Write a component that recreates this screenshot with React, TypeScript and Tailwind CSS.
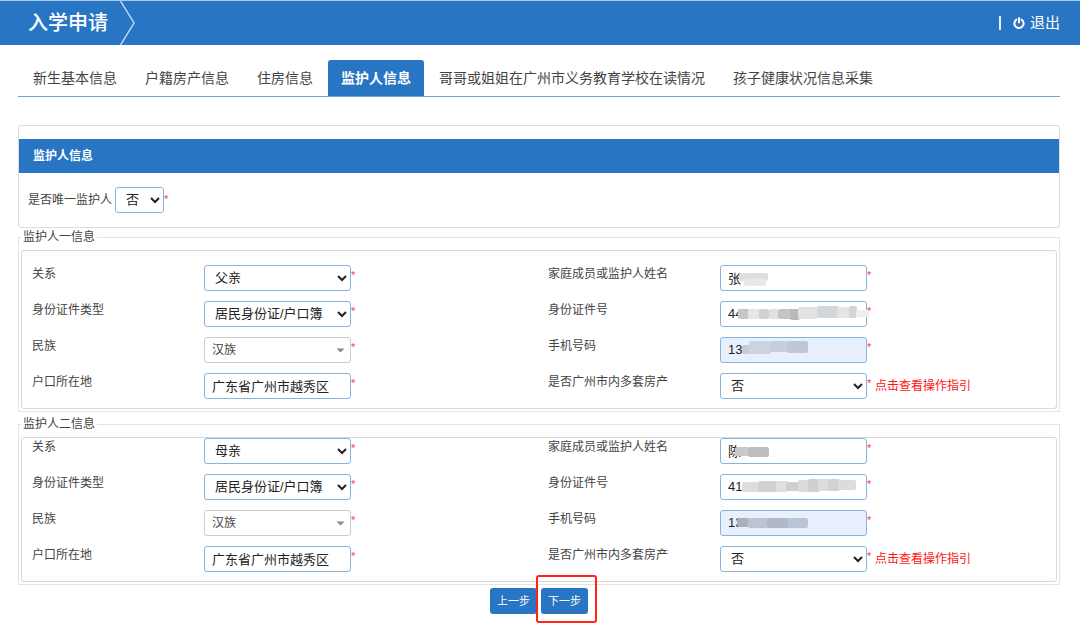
import { useState } from "react";
import { twMerge } from "tailwind-merge";

const tabs = [
  "新生基本信息",
  "户籍房产信息",
  "住房信息",
  "监护人信息",
  "哥哥或姐姐在广州市义务教育学校在读情况",
  "孩子健康状况信息采集",
];

// one painted strip of a mask: x, y, width, height, colour
type Strip = [number, number, number, number, string];

interface Guardian {
  id: string;
  legend: string;
  relation: string;
  name: string;
  idNumber: string;
  phone: string;
  nameMask: Strip[];
  idMask: Strip[];
  phoneMask: Strip[];
}

const guardians: Guardian[] = [
  {
    id: "g1",
    legend: "监护人一信息",
    relation: "父亲",
    name: "张",
    idNumber: "44",
    phone: "138",
    nameMask: [
      [19, 8, 29, 8, "#dedede"],
      [24, 14, 22, 7, "#e8e8e8"],
    ],
    idMask: [
      [18, 8, 12, 10, "#c9c5c5"],
      [28, 8, 12, 10, "#e6e6e6"],
      [39, 8, 10, 10, "#cfd0d3"],
      [49, 8, 10, 10, "#e0e0e0"],
      [58, 8, 14, 10, "#c6c4c6"],
      [70, 8, 10, 11, "#b8bab8"],
      [78, 6, 20, 12, "#e0e2e4"],
      [97, 5, 22, 12, "#d3d7da"],
      [117, 6, 14, 11, "#e3e5e7"],
      [129, 5, 8, 12, "#d2d5d8"],
      [136, 9, 13, 7, "#eeeeee"],
    ],
    phoneMask: [
      [22, 8, 14, 9, "#c5cddb"],
      [29, 4, 22, 13, "#ccd4e2"],
      [50, 4, 18, 11, "#c6cede"],
      [67, 4, 21, 12, "#bfc8d7"],
    ],
  },
  {
    id: "g2",
    legend: "监护人二信息",
    relation: "母亲",
    name: "陈",
    idNumber: "41",
    phone: "13",
    nameMask: [
      [15, 9, 14, 9, "#c9c9c9"],
      [28, 9, 21, 10, "#bdbdbd"],
    ],
    idMask: [
      [22, 8, 18, 10, "#dddddb"],
      [38, 7, 20, 11, "#d2d2d4"],
      [56, 7, 12, 11, "#dfdfdf"],
      [66, 8, 14, 9, "#d0cfcf"],
      [78, 6, 12, 12, "#dadcdb"],
      [88, 5, 12, 13, "#cfcfd1"],
      [98, 5, 12, 12, "#dbdddd"],
      [108, 5, 12, 12, "#cfd3d3"],
      [118, 6, 18, 10, "#dbdcdc"],
    ],
    phoneMask: [
      [17, 8, 12, 9, "#a9b1bf"],
      [28, 8, 20, 10, "#bcc4d3"],
      [47, 8, 22, 10, "#b1b9c9"],
      [68, 8, 20, 10, "#bac4d8"],
    ],
  },
];

const controlClass =
  "block h-[26px] w-[147px] rounded-[3px] border border-[#85b4e3] bg-white pb-[2px] text-[13px] leading-5 text-[#222]";

const Star = () => (
  <span className="block w-[6px] pt-[2px] text-[11px] leading-4 text-[#ff3b3b]">*</span>
);

const PowerIcon = () => (
  <svg width="12" height="12" viewBox="0 0 12 12" fill="none" aria-hidden="true">
    <path
      d="M3.4 2.6a4.6 4.6 0 1 0 5.2 0M6 1v4.6"
      stroke="currentColor"
      strokeWidth="2"
      strokeLinecap="round"
    />
  </svg>
);

interface MaskProps {
  strips: Strip[];
}
const Mask: React.FC<MaskProps> = ({ strips }) => (
  <svg
    className="pointer-events-none absolute left-0 top-0"
    width="150"
    height="26"
    aria-hidden="true"
  >
    {strips.map(([x, y, w, h, fill], i) => (
      <rect key={i} x={x} y={y} width={w} height={h} rx="2" fill={fill} />
    ))}
  </svg>
);

interface FieldProps {
  id: string;
  label: string;
  children: React.ReactNode;
  extra?: React.ReactNode;
}
const Field: React.FC<FieldProps> = ({ id, label, children, extra }) => (
  <>
    <label htmlFor={id} className="pl-[10px] text-xs leading-[18px] text-[#444]">
      {label}
    </label>
    <div className="col-span-2 flex items-start pl-[10px]">
      <div className="relative">{children}</div>
      <Star />
      {extra}
    </div>
  </>
);

interface SelectProps {
  id: string;
  options: string[];
  className?: string;
}
const Select: React.FC<SelectProps> = ({ id, options, className }) => (
  <select id={id} className={twMerge(controlClass, "px-[6px]", className)}>
    {options.map((option) => (
      <option key={option}>{option}</option>
    ))}
  </select>
);

interface TextInputProps {
  id: string;
  value: string;
  className?: string;
}
const TextInput: React.FC<TextInputProps> = ({ id, value, className }) => (
  <input
    id={id}
    type="text"
    defaultValue={value}
    className={twMerge(controlClass, "px-[7px]", className)}
  />
);

interface GuardianFormProps {
  guardian: Guardian;
  className: string;
}
const GuardianForm: React.FC<GuardianFormProps> = ({ guardian, className }) => {
  const { id } = guardian;

  return (
    <fieldset className="mb-[3px] border border-[#e4e4e4] px-[2px] pb-[2px] pt-1">
      <legend className="px-[2px] text-xs leading-[18px] text-[#444]">
        {guardian.legend}
      </legend>
      <div
        className={twMerge(
          "grid grid-cols-6 gap-y-[10px] rounded-[3px] border border-[#d8d8d8] pr-[2px]",
          className
        )}
      >
        <Field id={`${id}-relation`} label="关系">
          <Select id={`${id}-relation`} options={[guardian.relation]} />
        </Field>
        <Field id={`${id}-name`} label="家庭成员或监护人姓名">
          <TextInput id={`${id}-name`} value={guardian.name} />
          <Mask strips={guardian.nameMask} />
        </Field>
        <Field id={`${id}-cert`} label="身份证件类型">
          <Select id={`${id}-cert`} options={["居民身份证/户口簿"]} />
        </Field>
        <Field id={`${id}-number`} label="身份证件号">
          <TextInput id={`${id}-number`} value={guardian.idNumber} />
          <Mask strips={guardian.idMask} />
        </Field>
        <Field id={`${id}-nation`} label="民族">
          <Select
            id={`${id}-nation`}
            options={["汉族"]}
            className="appearance-none border-[#ccc] px-[7px] pb-0 text-xs text-[#444]"
          />
          <svg
            className="pointer-events-none absolute right-[6px] top-[11px]"
            width="9"
            height="5"
            viewBox="0 0 9 5"
            aria-hidden="true"
          >
            <path d="M0.5 0.5h8l-4 4z" fill="#888" />
          </svg>
        </Field>
        <Field id={`${id}-phone`} label="手机号码">
          <TextInput
            id={`${id}-phone`}
            value={guardian.phone}
            className="bg-[#e8f0fe]"
          />
          <Mask strips={guardian.phoneMask} />
        </Field>
        <Field id={`${id}-place`} label="户口所在地">
          <TextInput id={`${id}-place`} value="广东省广州市越秀区" />
        </Field>
        <Field
          id={`${id}-house`}
          label="是否广州市内多套房产"
          extra={
            <a href="#guide" className="pl-[2px] text-xs leading-[26px] text-[#ff1414]">
              点击查看操作指引
            </a>
          }
        >
          <Select id={`${id}-house`} options={["否", "是"]} />
        </Field>
      </div>
    </fieldset>
  );
};

export default function App() {
  const [active, setActive] = useState("监护人信息");

  return (
    <div className="min-h-screen bg-white [font-family:'Liberation_Sans','Noto_Sans_CJK_SC',sans-serif]">
      <header className="flex h-[45px] items-center justify-between border-t border-[#a9c8e8] bg-[#2876c3] pl-7 pr-5 text-white">
        <div className="flex items-center gap-3">
          <h1 className="text-xl font-medium">入学申请</h1>
          <svg width="15" height="44" viewBox="0 0 15 44" fill="none" aria-hidden="true">
            <path d="M0.5 0L14 22L0.5 44" stroke="#c5dbf1" strokeWidth="1.4" />
          </svg>
        </div>
        <div className="flex items-center gap-3">
          <span className="h-[14px] w-[2px] bg-[#e8eff8]" />
          <button type="button" className="flex items-center gap-[5px] text-[15px]">
            <PowerIcon />
            退出
          </button>
        </div>
      </header>

      <main className="pl-[18px] pr-5">
        <nav className="mt-[15px] flex gap-[2px] border-b border-[#6ca3db] pl-[2px]">
          {tabs.map((tab) => (
            <button
              key={tab}
              type="button"
              onClick={() => setActive(tab)}
              className={twMerge(
                "h-9 whitespace-nowrap rounded-t-[3px] px-[13px] text-sm text-[#444]",
                tab === active && "bg-[#2876c3] font-bold text-white"
              )}
            >
              {tab}
            </button>
          ))}
        </nav>

        <section className="mt-7 rounded-[3px] border border-[#dcdcdc] pt-[13px]">
          <h2 className="bg-[#2876c3] pl-[14px] text-xs font-bold leading-[34px] text-white">
            监护人信息
          </h2>
          <div className="flex items-start py-[14px] pl-[9px]">
            <label htmlFor="only" className="pr-[3px] text-xs leading-[26px] text-[#444]">
              是否唯一监护人
            </label>
            <Select id="only" options={["否", "是"]} className="w-[49px]" />
            <div className="pt-[2px]">
              <Star />
            </div>
          </div>
        </section>

        {guardians.map((guardian, i) => (
          <GuardianForm
            key={guardian.id}
            guardian={guardian}
            className={i === 0 ? "pb-[9px] pt-[14px]" : "pb-[9px]"}
          />
        ))}

        <div className="flex justify-center gap-1">
          <button
            type="button"
            className="h-[26px] w-[47px] rounded-[3px] bg-[#2876c3] text-[11px] text-white"
          >
            上一步
          </button>
          <div className="relative">
            <button
              type="button"
              className="h-[26px] w-[47px] rounded-[3px] bg-[#2876c3] text-[11px] text-white"
            >
              下一步
            </button>
            <div className="pointer-events-none absolute -bottom-[9px] -left-[5px] -right-[9px] -top-[13px] rounded-[3px] border-2 border-[#fe2418]" />
          </div>
        </div>
      </main>
    </div>
  );
}
